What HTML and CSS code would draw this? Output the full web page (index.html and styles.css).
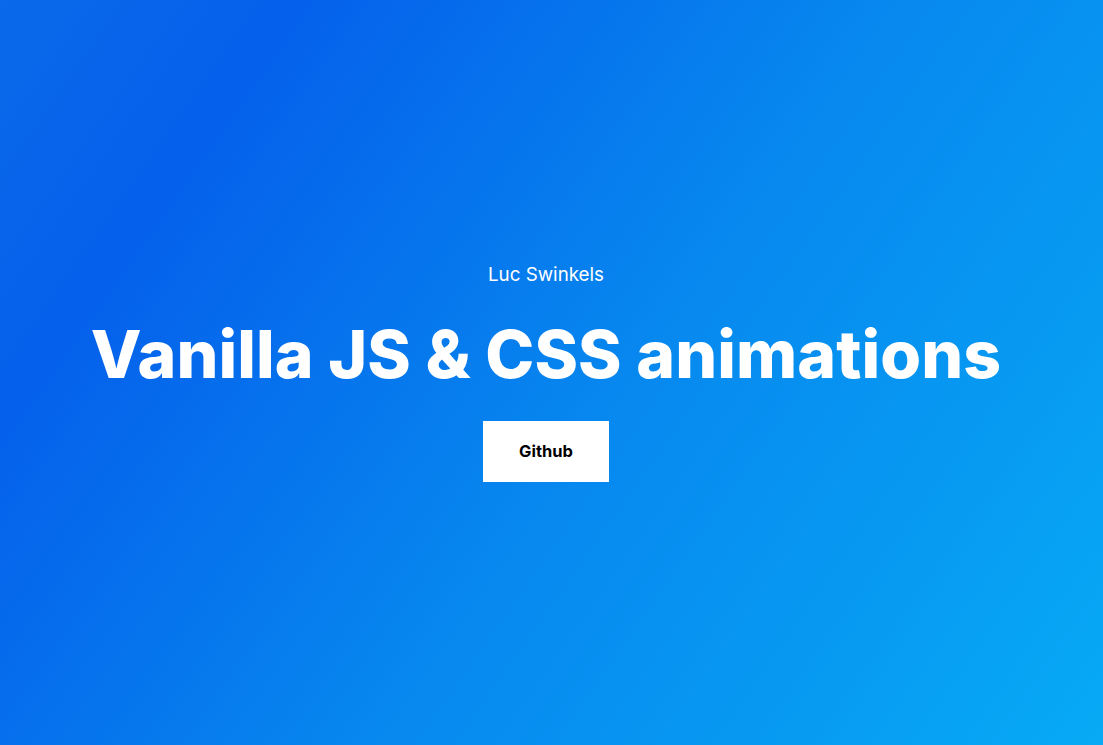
FILE: index.html
```html
<!DOCTYPE html>
<html lang="en">
<head>
<meta charset="utf-8">
<title>Vanilla JS & CSS animations</title>
<link rel="stylesheet" href="styles.css">
</head>
<body>
<main class="hero">
  <p class="author">Luc Swinkels</p>
  <h1 class="title">Vanilla JS &amp; CSS animations</h1>
  <a class="btn" href="#">Github</a>
</main>
</body>
</html>
```
FILE: styles.css
```css
html, body {
  margin: 0;
  padding: 0;
  height: 100%;
}
body {
  font-family: "Inter", "Open Sans", sans-serif;
  color: #fff;
}
.hero {
  box-sizing: border-box;
  height: 745px;
  padding: 0 11px 3px 0;
  display: flex;
  flex-direction: column;
  align-items: center;
  justify-content: center;
  background: linear-gradient(125deg, #0a69ea 0%, #0560eb 18%, #0788ef 55%, #07aaf5 100%);
}
.author {
  margin: 0 0 2px;
  font-size: 18.8px;
  line-height: 27px;
  font-weight: 400;
}
.title {
  margin: 19px 0 22px;
  font-size: 66px;
  line-height: 90px;
  font-weight: 800;
  letter-spacing: 0.1px;
}
.btn {
  display: flex;
  align-items: center;
  justify-content: center;
  width: 126px;
  height: 61px;
  background: #fff;
  color: #000;
  text-decoration: none;
  font-size: 16.5px;
  font-weight: 700;
}
```
